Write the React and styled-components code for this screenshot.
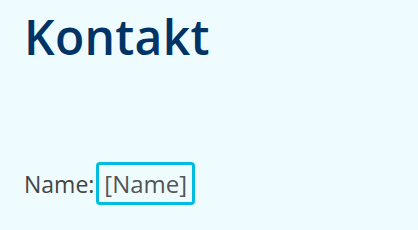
import React from 'react';
import styled, { createGlobalStyle } from 'styled-components';

const GlobalStyle = createGlobalStyle`
  html, body {
    margin: 0;
    padding: 0;
    background: #effcff;
  }
  body {
    font-family: "Open Sans", "Noto Sans", sans-serif;
  }
`;

const Page = styled.div`
  padding: 6px 24px 0 24px;
  height: 230px;
  box-sizing: border-box;
`;

const Title = styled.h1`
  margin: 0;
  font-size: 48px;
  line-height: 62px;
  font-weight: 600;
  letter-spacing: 0.3px;
  color: #003366;
`;

const Row = styled.div`
  display: flex;
  align-items: center;
  margin-top: 94px;
  font-size: 23px;
  color: #444;
`;

const Field = styled.span`
  display: inline-flex;
  align-items: center;
  margin-left: 2px;
  padding: 0 5px;
  height: 43px;
  box-sizing: border-box;
  border: 3px solid #00bde0;
  border-radius: 4px;
  font-size: 24px;
  color: #555;
`;

export default function App() {
  return (
    <Page>
      <GlobalStyle />
      <Title>Kontakt</Title>
      <Row>
        Name:
        <Field>[Name]</Field>
      </Row>
    </Page>
  );
}
